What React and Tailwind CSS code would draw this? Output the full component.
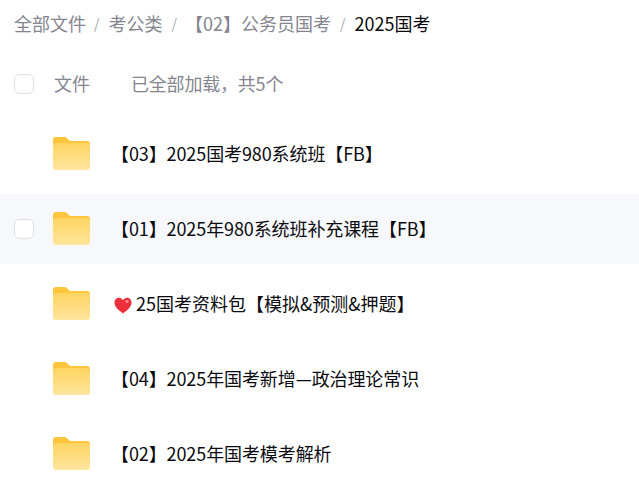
const font = { fontFamily: '"Noto Sans CJK SC", sans-serif' };

const rows = [
  { name: "【03】2025国考980系统班【FB】" },
  { name: "【01】2025年980系统班补充课程【FB】", active: true },
  { name: "25国考资料包【模拟&预测&押题】", heart: true },
  { name: "【04】2025年国考新增—政治理论常识" },
  { name: "【02】2025年国考模考解析" },
];

function Folder() {
  return (
    <svg width="37" height="33" viewBox="0 0 37 33" className="shrink-0 block -mt-px">
      <defs>
        <linearGradient id="folderFront" x1="0" y1="0" x2="0" y2="1">
          <stop offset="0" stopColor="#ffd561" />
          <stop offset="1" stopColor="#ffe59e" />
        </linearGradient>
      </defs>
      <path d="M0 3a3 3 0 0 1 3-3h8.500a3 3 0 0 1 2 .8L17 4h17a3 3 0 0 1 3 3v8H0z" fill="#ffc53d" />
      <path d="M0 9a3 3 0 0 1 3-3h31a3 3 0 0 1 3 3v21a3 3 0 0 1-3 3H3a3 3 0 0 1-3-3z" fill="url(#folderFront)" />
    </svg>
  );
}

function Heart() {
  return (
    <svg width="18" height="17" viewBox="0 0 18 17" className="shrink-0 mr-[4px] mt-[2px]">
      <path d="M9 16.500C4 12.800.5 9.800.5 5.600.5 2.800 2.600.8 5 .8c1.700 0 3.100.9 4 2.400C9.900 1.700 11.300.8 13 .8c2.400 0 4.500 2 4.500 4.800 0 4.200-3.500 7.200-8.500 10.900z" fill="#ec2f3a" />
      <ellipse cx="13" cy="4.500" rx="1.800" ry="1.400" fill="#f98a8e" />
    </svg>
  );
}

function Checkbox() {
  return <div className="w-5 h-5 bg-white border border-[#dfe0e8] rounded-[5px] shrink-0"></div>;
}

export default function App() {
  return (
    <div className="w-[639px] h-[497px] overflow-hidden bg-white" style={font}>
      <div className="flex items-center h-[46px] mb-[2px] pl-[14px] text-[18px] text-[#84858f] whitespace-nowrap">
        <span>全部文件</span>
        <span className="ml-2 mr-[9px] text-[14px] text-[#a5a6ae]">/</span>
        <span>考公类</span>
        <span className="ml-[9px] mr-[8px] text-[14px] text-[#a5a6ae]">/</span>
        <span>【02】公务员国考</span>
        <span className="mx-[9px] text-[14px] text-[#a5a6ae]">/</span>
        <span className="text-[#0b0b0f]">2025国考</span>
      </div>
      <div className="flex items-center h-[71px] pl-[14px] text-[18px] text-[#84858f] whitespace-nowrap">
        <Checkbox />
        <span className="ml-5">文件</span>
        <span className="ml-[41px] tracking-[-0.2px]">已全部加载，共5个</span>
      </div>
      <div>
        {rows.map((row) => (
          <div
            key={row.name}
            className={`flex items-center h-[70px] mb-[5px] pl-[14px] ${row.active ? "bg-[#f7f8fc]" : ""}`}
          >
            <div className="w-5 shrink-0">{row.active && <Checkbox />}</div>
            <div className="ml-[19px]"><Folder /></div>
            <div className="flex items-center ml-[24px] text-[18px] text-[#0b0b0f] whitespace-nowrap">
              {row.heart && <Heart />}
              <span className={row.heart ? "-mt-[2px]" : "-ml-[3px] -mt-[2px] tracking-[-0.1px]"}>{row.name}</span>
            </div>
          </div>
        ))}
      </div>
    </div>
  );
}
